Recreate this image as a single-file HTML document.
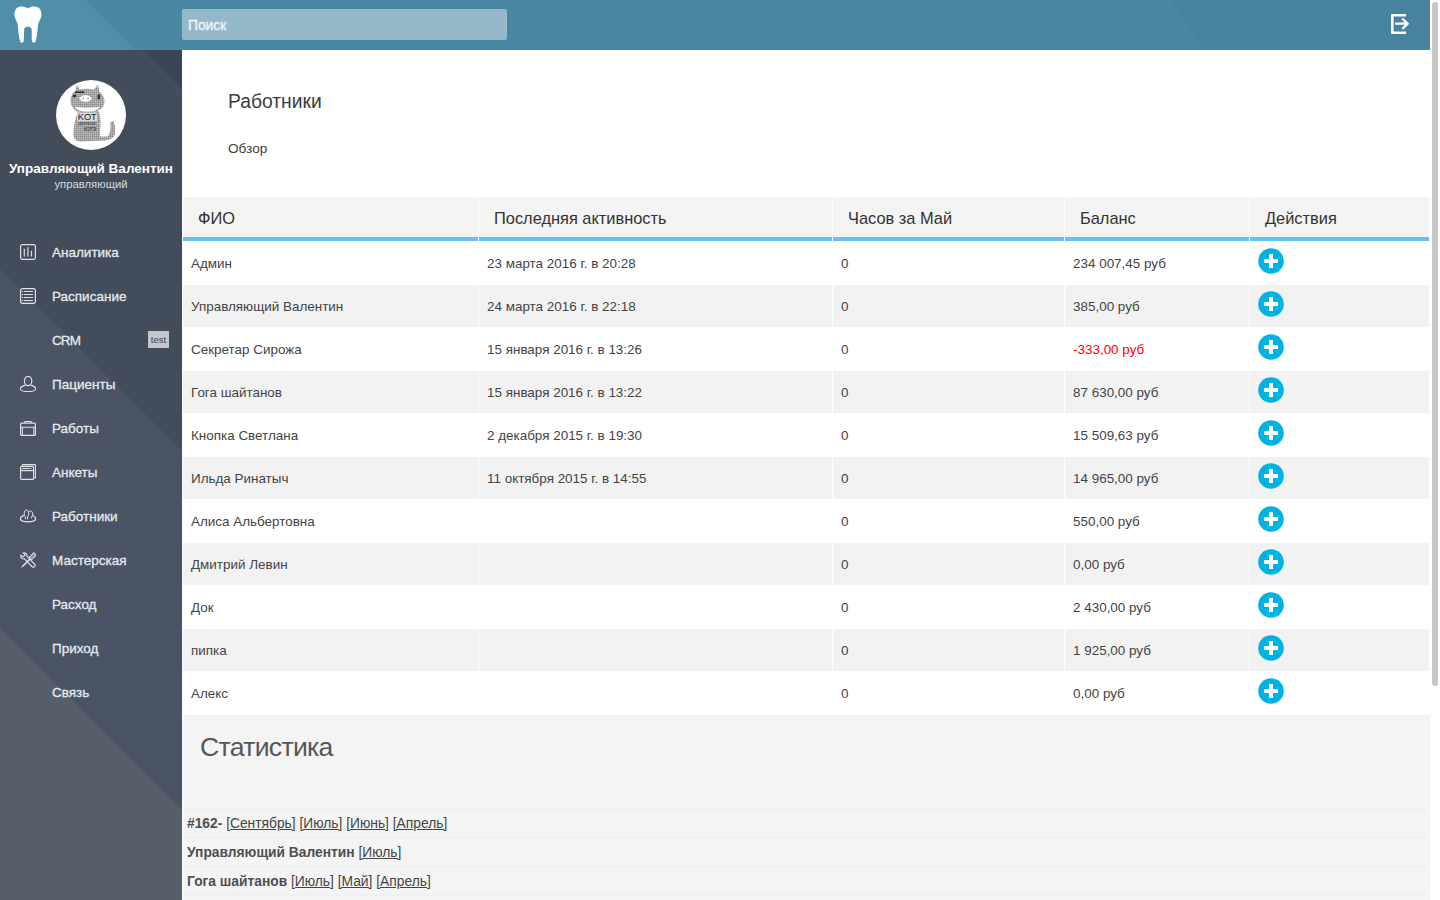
<!DOCTYPE html>
<html lang="ru">
<head>
<meta charset="utf-8">
<title>Работники</title>
<style>
*{box-sizing:border-box;margin:0;padding:0}
html,body{width:1440px;height:900px;overflow:hidden;background:#fff}
body{font-family:"Liberation Sans",sans-serif;color:#444;position:relative}
#hdr{position:absolute;left:0;top:0;width:1430px;height:50px;background:#4a87a2;overflow:hidden}
#hdr svg.bg{position:absolute;left:0;top:0}
#logo{position:absolute;left:14px;top:6px}
#search{position:absolute;left:182px;top:9px;width:325px;height:31px;background:#96b9ca;border-radius:2px}
#search span{position:absolute;left:6px;top:9px;font-size:13.8px;font-weight:400;color:#eef4f7;-webkit-text-stroke:0.4px #eef4f7}
#logout{position:absolute;left:1389px;top:12px}
#side{position:absolute;left:0;top:50px;width:182px;height:850px;background:#424c5b;overflow:hidden}
#side svg.bg{position:absolute;left:0;top:0}
#avatar{position:absolute;left:56px;top:30px;width:70px;height:70px;border-radius:50%;background:#fff;overflow:hidden}
#uname{position:absolute;left:0;top:111px;width:182px;text-align:center;font-size:13.5px;font-weight:700;color:#fff;white-space:nowrap}
#urole{position:absolute;left:0;top:128px;width:182px;text-align:center;font-size:11.3px;color:#d3dae3;white-space:nowrap}
.nav{position:absolute;left:0;width:182px;height:44px}
.nav .t{position:absolute;left:52px;top:15px;font-size:13.5px;font-weight:400;-webkit-text-stroke:0.28px #e6eaee;color:#e6eaee;white-space:nowrap}
.nav svg{position:absolute;left:20px;top:14px}
.badge{position:absolute;left:148px;top:13px;width:21px;height:17px;background:#c4c6cb;color:#434857;font-size:9.6px;line-height:18px;text-align:center}
#main{position:absolute;left:182px;top:50px;width:1248px;height:850px;background:#fff;overflow:hidden}
#title{position:absolute;left:46px;top:41px;font-size:19.3px;color:#3d3d3d;white-space:nowrap}
#sub{position:absolute;left:46px;top:91px;font-size:13.6px;color:#3d3d3d;white-space:nowrap}
table{position:absolute;left:0;top:146px;width:1248px;border-collapse:separate;border-spacing:1px;background:#fff}
th{height:44px;background:#f4f4f4;border-bottom:4px solid #62c1f7;text-align:left;font-weight:400;font-size:16.4px;color:#333;padding:2px 0 0 15px;vertical-align:middle}
td{height:42px;padding:0 0 0 8px;font-size:13.45px;color:#444;vertical-align:middle;white-space:nowrap}
tr.g td{background:#f2f2f2}
.neg{color:#f00}
.plus{display:block;width:26px;height:26px;position:relative;top:-2px}
#stats{position:absolute;left:1px;top:665px;width:1247px;height:200px;background:#f4f4f4}
#stats h2{position:absolute;left:17px;top:16.5px;font-size:26.6px;font-weight:400;letter-spacing:-0.7px;color:#575757;white-space:nowrap}
.sl{position:absolute;left:0;width:1247px;height:29px;border-top:1px solid #eeeeee;font-size:13.8px;color:#444;white-space:nowrap;padding-left:4px;padding-top:7px}
.sl b{color:#4f4f4f}
.sl a{color:#444;text-decoration:underline}
#sb{position:absolute;left:1430px;top:0;width:10px;height:900px;background:#fff}
#sb div{position:absolute;left:2px;top:2px;width:6px;height:684px;border-radius:3px;background:#c6c6c6}
</style>
</head>
<body>
<div id="hdr">
<svg class="bg" width="1430" height="50">
<polygon points="0,0 86,0 136,50 0,50" fill="#508ea9"/><polygon points="805,0 1430,0 1430,50 840,50" fill="#4986a1"/><polygon points="1172,0 1430,0 1430,50 1205,50" fill="#48839d"/>
</svg>
<svg id="logo" width="60" height="50" viewBox="0 0 60 50" style="position:absolute;left:0;top:0"><path fill="#fff" d="M27.8 8.3C24 6.2 20 6.2 17.5 7.5C14.5 9.5 14 14 14.8 17C15.5 20 17.5 22 17.8 25C18.2 30 18.8 37 20 41C20.6 43.2 23.2 43.2 23.8 41C24.2 37 23.8 31 24.4 28.5C25 26 30.6 26 31.4 28.5C32 31 31.6 37 32 41C32.6 43.2 35.2 43.2 35.8 41C37 37 37.6 30 38 25C38.3 22 40.4 20 41.1 17C41.9 14 41.4 9.5 38.3 7.5C35.8 6.2 31.6 6.2 27.8 8.3Z"/></svg>
<div id="search"><span>Поиск</span></div>
<svg id="logout" width="30" height="30" viewBox="1385 9 30 30" style="position:absolute;left:1385px;top:9px"><path d="M1406 15.3H1392.3V32.7H1406" fill="none" stroke="#fff" stroke-width="2.6"/><path d="M1395 23.7H1407.5M1402.3 18.6L1407.6 23.7L1402.3 28.8" fill="none" stroke="#fff" stroke-width="2.3"/></svg>
</div>

<div id="side">
<svg class="bg" width="182" height="850">
<polygon points="137,0 182,0 182,45" fill="#434d5d"/><polygon points="143,0 182,0 182,39" fill="#3c4555"/>
<polygon points="0,219 182,401 182,760 0,578" fill="#4b5464"/>
<polygon points="0,578 182,760 182,850 0,850" fill="#565e6c"/>
</svg>
<div id="avatar"><svg width="70" height="70" viewBox="56 80 70 70">
<defs><pattern id="tx" width="2" height="2" patternUnits="userSpaceOnUse"><rect width="2" height="2" fill="#a6a6a6"/><rect x="0" y="0" width="1" height="1" fill="#8a8a8a"/><rect x="1" y="1" width="1" height="1" fill="#bdbdbd"/></pattern></defs>
<path fill="url(#tx)" d="M77 84.5L79.5 89.5C82 88.8 86 88.6 88.5 88.8L94 89.5L98 84.5L99.5 92C102 94 104.5 97 104.5 101C104.5 106 101.5 109 98 110.5C99.5 113 100.5 117 100.5 122C100.5 128 99.5 134 100.5 136.5L108 136.5L110.5 130L110.5 122L113.5 121L115 126L115 134C114 138 110 140 105 140.5L80 141.5C75 141 73 138 73.5 132C74 126 75 118 78 112C75 110 70.5 107 70.5 101C70.5 96 72.5 92.5 75.5 91Z"/>
<path d="M75 91.5L84 91.5L84 93L75 93Z" fill="#222"/>
<path d="M73 95L76 94.5L76 97L73 97.5Z" fill="#333"/>
<path d="M97.5 95L100 94L100 99L97.5 99.5Z" fill="#333"/>
<ellipse cx="85.5" cy="98.5" rx="6" ry="3.2" fill="#fff"/>
<circle cx="83" cy="98.5" r="1.2" fill="#ccc"/><circle cx="88" cy="98.5" r="1.2" fill="#ccc"/>
<path d="M75 106.5C80 108 94 108 99.5 106.5C98 110.5 94 111.5 87 111.5C80 111.5 76.5 110 75 106.5Z" fill="#fff"/>
<rect x="77" y="112.5" width="20" height="8.5" fill="#d8d8d8"/><text x="87.2" y="120.4" font-family="Liberation Sans" font-size="9.2" text-anchor="middle" fill="#1a1a1a">KOT</text>
<text x="87" y="125" font-family="Liberation Sans" font-size="4" text-anchor="middle" fill="#333">ЧЕРНЫЙ</text>
<text x="90" y="131" font-family="Liberation Sans" font-size="4.5" text-anchor="middle" fill="#222">КОТЭ</text>
</svg></div>
<div id="uname">Управляющий Валентин</div>
<div id="urole">управляющий</div>
<div class="nav" style="top:180px"><svg width="16" height="16" viewBox="0 0 16 16"><rect x="0.6" y="0.6" width="14.8" height="14.8" rx="1.8" fill="none" stroke="#dde2e7" stroke-width="1.2"/><path d="M4.3 4.8V12.5M7.9 3.3V12.5M11.5 6.8V12.5" fill="none" stroke="#dde2e7" stroke-width="1.2"/></svg><span class="t">Аналитика</span></div>
<div class="nav" style="top:224px"><svg width="16" height="16" viewBox="0 0 16 16"><rect x="0.6" y="0.6" width="14.8" height="14.8" rx="1.8" fill="none" stroke="#dde2e7" stroke-width="1.2"/><path d="M3.8 3.5H13M3.8 6.5H13M3.8 9.5H13M3.8 12.5H13" fill="none" stroke="#dde2e7" stroke-width="1.2"/><path d="M2 3.5H2.9M2 6.5H2.9M2 9.5H2.9M2 12.5H2.9" fill="none" stroke="#dde2e7" stroke-width="1.2"/></svg><span class="t">Расписание</span></div>
<div class="nav" style="top:268px"><span class="t" style="letter-spacing:-0.9px">CRM</span><span class="badge">test</span></div>
<div class="nav" style="top:312px"><svg width="16" height="16" viewBox="0 0 16 16"><ellipse cx="8.1" cy="5" rx="3.7" ry="4.6" fill="none" stroke="#dde2e7" stroke-width="1.2"/><path d="M5.2 9.3C2.2 10 0.4 11.3 0.4 12.9C0.4 14.7 3.9 15.6 8.1 15.6C12.3 15.6 15.6 14.7 15.6 12.9C15.6 11.3 13.9 10 11 9.3" fill="none" stroke="#dde2e7" stroke-width="1.2"/></svg><span class="t">Пациенты</span></div>
<div class="nav" style="top:356px"><svg width="16" height="16" viewBox="0 0 16 16"><path d="M4.7 3V1.5H11.4V3" fill="none" stroke="#dde2e7" stroke-width="1"/><rect x="0.6" y="3.2" width="14.8" height="12.2" rx="1" fill="none" stroke="#dde2e7" stroke-width="1.2"/><path d="M0.6 7.3H15.4M2.4 7.3V15.4M13.8 7.3V15.4" fill="none" stroke="#dde2e7" stroke-width="1"/><path d="M7.6 7.4H8.6V8.4H7.6Z" fill="#9aa2ad"/></svg><span class="t">Работы</span></div>
<div class="nav" style="top:400px"><svg width="16" height="16" viewBox="0 0 16 16"><path d="M2.3 1.8V1.2C2.3 0.8 2.6 0.6 3 0.6H15C15.3 0.6 15.6 0.9 15.6 1.2V13.4C15.6 13.7 15.3 14 15 14H13.8" fill="none" stroke="#dde2e7" stroke-width="1.2"/><rect x="0.6" y="2.4" width="13" height="13" rx="1.2" fill="none" stroke="#dde2e7" stroke-width="1.2"/><path d="M0.6 6.6H13.6" fill="none" stroke="#dde2e7" stroke-width="1.2"/><path d="M2.2 4.5H9" stroke="#dde2e7" stroke-width="1.1"/><path d="M9 4.5H12" stroke="#9aa2ad" stroke-width="1.1"/></svg><span class="t">Анкеты</span></div>
<div class="nav" style="top:444px"><svg width="16" height="16" viewBox="0 0 16 16"><path d="M3.9 7.4C1.7 8.1 0.4 9.3 0.4 10.6C0.4 12.5 3.8 13.8 8 13.8C12.2 13.8 15.6 12.5 15.6 10.6C15.6 9.3 14.4 8.2 12.3 7.5" fill="none" stroke="#dde2e7" stroke-width="1.2"/><path d="M5.4 11.2V8.8C4.6 8.2 4.2 7 4.2 5.6C4.2 3.4 5.2 2 6.5 2C7.8 2 8.7 3.4 8.7 5.6C8.7 7 8.3 8.2 7.5 8.8V11.2" fill="none" stroke="#dde2e7" stroke-width="1"/><path d="M8.4 4.8C8.8 3.6 9.6 3 10.6 3C11.9 3 12.7 4.3 12.7 6.1C12.7 7.5 12.2 8.6 11.4 9.1V10.2" fill="none" stroke="#dde2e7" stroke-width="1"/></svg><span class="t">Работники</span></div>
<div class="nav" style="top:488px"><svg width="16" height="16" viewBox="0 0 16 16"><path d="M0.9 3.2L2.9 5.1L5.1 2.9L3.2 0.9C5 0.3 6.9 1.5 7 3.5L6.9 4.4L14.5 12C15.3 12.8 15.3 13.9 14.6 14.6C13.9 15.3 12.8 15.3 12 14.5L4.4 6.9L3.5 7C1.5 6.9 0.3 5 0.9 3.2Z" fill="none" stroke="#dde2e7" stroke-width="1.1"/><path d="M16.1 3.1L13.9 0.9L9.2 5.6L11.4 7.8Z" fill="none" stroke="#dde2e7" stroke-width="1.1"/><path d="M12.7 2.1L14.9 4.3M11.5 3.3L13.7 5.5M10.3 4.5L12.5 6.7" stroke="#dde2e7" stroke-width="0.9"/><path d="M10.3 6.7L2.2 14.8" stroke="#dde2e7" stroke-width="1.6"/><path d="M2.6 14.4L1.4 15.6" stroke="#dde2e7" stroke-width="1"/></svg><span class="t">Мастерская</span></div>
<div class="nav" style="top:532px"><span class="t">Расход</span></div>
<div class="nav" style="top:576px"><span class="t">Приход</span></div>
<div class="nav" style="top:620px"><span class="t">Связь</span></div>
</div>

<div id="main">
<div id="title">Работники</div>
<div id="sub">Обзор</div>
<table>
<colgroup><col style="width:295px"><col style="width:353px"><col style="width:231px"><col style="width:184px"><col></colgroup>
<tr><th>ФИО</th><th>Последняя активность</th><th>Часов за Май</th><th>Баланс</th><th>Действия</th></tr>
<tr><td>Админ</td><td>23 марта 2016 г. в 20:28</td><td>0</td><td>234 007,45 руб</td><td><svg class="plus" viewBox="0 0 26 26"><circle cx="13" cy="13" r="12.8" fill="#00b3e3"/><rect x="6" y="11" width="14" height="4" fill="#fff"/><rect x="11" y="6" width="4" height="14" fill="#fff"/></svg></td></tr>
<tr class="g"><td>Управляющий Валентин</td><td>24 марта 2016 г. в 22:18</td><td>0</td><td>385,00 руб</td><td><svg class="plus" viewBox="0 0 26 26"><circle cx="13" cy="13" r="12.8" fill="#00b3e3"/><rect x="6" y="11" width="14" height="4" fill="#fff"/><rect x="11" y="6" width="4" height="14" fill="#fff"/></svg></td></tr>
<tr><td>Секретар Сирожа</td><td>15 января 2016 г. в 13:26</td><td>0</td><td><span class="neg">-333,00 руб</span></td><td><svg class="plus" viewBox="0 0 26 26"><circle cx="13" cy="13" r="12.8" fill="#00b3e3"/><rect x="6" y="11" width="14" height="4" fill="#fff"/><rect x="11" y="6" width="4" height="14" fill="#fff"/></svg></td></tr>
<tr class="g"><td>Гога шайтанов</td><td>15 января 2016 г. в 13:22</td><td>0</td><td>87 630,00 руб</td><td><svg class="plus" viewBox="0 0 26 26"><circle cx="13" cy="13" r="12.8" fill="#00b3e3"/><rect x="6" y="11" width="14" height="4" fill="#fff"/><rect x="11" y="6" width="4" height="14" fill="#fff"/></svg></td></tr>
<tr><td>Кнопка Светлана</td><td>2 декабря 2015 г. в 19:30</td><td>0</td><td>15 509,63 руб</td><td><svg class="plus" viewBox="0 0 26 26"><circle cx="13" cy="13" r="12.8" fill="#00b3e3"/><rect x="6" y="11" width="14" height="4" fill="#fff"/><rect x="11" y="6" width="4" height="14" fill="#fff"/></svg></td></tr>
<tr class="g"><td>Ильда Ринатыч</td><td>11 октября 2015 г. в 14:55</td><td>0</td><td>14 965,00 руб</td><td><svg class="plus" viewBox="0 0 26 26"><circle cx="13" cy="13" r="12.8" fill="#00b3e3"/><rect x="6" y="11" width="14" height="4" fill="#fff"/><rect x="11" y="6" width="4" height="14" fill="#fff"/></svg></td></tr>
<tr><td>Алиса Альбертовна</td><td></td><td>0</td><td>550,00 руб</td><td><svg class="plus" viewBox="0 0 26 26"><circle cx="13" cy="13" r="12.8" fill="#00b3e3"/><rect x="6" y="11" width="14" height="4" fill="#fff"/><rect x="11" y="6" width="4" height="14" fill="#fff"/></svg></td></tr>
<tr class="g"><td>Дмитрий Левин</td><td></td><td>0</td><td>0,00 руб</td><td><svg class="plus" viewBox="0 0 26 26"><circle cx="13" cy="13" r="12.8" fill="#00b3e3"/><rect x="6" y="11" width="14" height="4" fill="#fff"/><rect x="11" y="6" width="4" height="14" fill="#fff"/></svg></td></tr>
<tr><td>Док</td><td></td><td>0</td><td>2 430,00 руб</td><td><svg class="plus" viewBox="0 0 26 26"><circle cx="13" cy="13" r="12.8" fill="#00b3e3"/><rect x="6" y="11" width="14" height="4" fill="#fff"/><rect x="11" y="6" width="4" height="14" fill="#fff"/></svg></td></tr>
<tr class="g"><td>пипка</td><td></td><td>0</td><td>1 925,00 руб</td><td><svg class="plus" viewBox="0 0 26 26"><circle cx="13" cy="13" r="12.8" fill="#00b3e3"/><rect x="6" y="11" width="14" height="4" fill="#fff"/><rect x="11" y="6" width="4" height="14" fill="#fff"/></svg></td></tr>
<tr><td>Алекс</td><td></td><td>0</td><td>0,00 руб</td><td><svg class="plus" viewBox="0 0 26 26"><circle cx="13" cy="13" r="12.8" fill="#00b3e3"/><rect x="6" y="11" width="14" height="4" fill="#fff"/><rect x="11" y="6" width="4" height="14" fill="#fff"/></svg></td></tr>
</table>
<div id="stats"><h2>Статистика</h2>
<div class="sl" style="top:93px"><b>#162-</b> <a>[Сентябрь]</a> <a>[Июль]</a> <a>[Июнь]</a> <a>[Апрель]</a></div>
<div class="sl" style="top:122px"><b>Управляющий Валентин</b> <a>[Июль]</a></div>
<div class="sl" style="top:151px"><b>Гога шайтанов</b> <a>[Июль]</a> <a>[Май]</a> <a>[Апрель]</a></div>
<div class="sl" style="top:180px"></div>
</div>
</div>

<div id="sb"><div></div></div>
</body>
</html>
